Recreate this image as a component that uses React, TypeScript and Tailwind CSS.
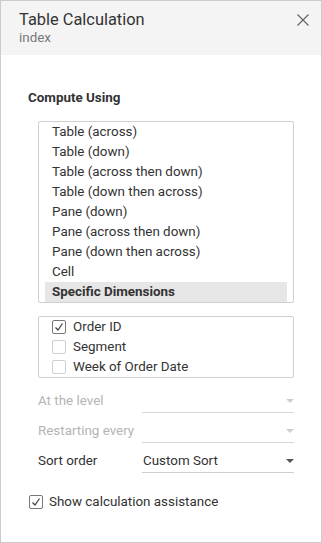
import { useState } from "react";

const computeOptions = [
  "Table (across)",
  "Table (down)",
  "Table (across then down)",
  "Table (down then across)",
  "Pane (down)",
  "Pane (across then down)",
  "Pane (down then across)",
  "Cell",
  "Specific Dimensions",
];

function CheckBox({ checked, onChange }: { checked: boolean; onChange: () => void }) {
  return (
    <button
      onClick={onChange}
      className={`w-[14px] h-[14px] shrink-0 rounded-[2px] border bg-white flex items-center justify-center ${
        checked ? "border-[#777]" : "border-[#cfcfcf]"
      }`}
    >
      {checked && (
        <svg width="12" height="12" viewBox="0 0 12 12">
          <polyline points="2.5,6.5 5,9 9.5,2.5" fill="none" stroke="#444" strokeWidth="1.3" />
        </svg>
      )}
    </button>
  );
}

function SelectRow({ label, value, disabled }: { label: string; value?: string; disabled?: boolean }) {
  return (
    <div className="flex items-center h-[30px]">
      <span className={`w-[104px] leading-[20px] ${disabled ? "text-[#b4b4b4]" : "text-[#333]"}`}>{label}</span>
      <div
        className={`w-[152px] h-[24px] border-b flex items-center justify-between pl-[1px] ${
          disabled ? "border-[#d6d6d6]" : "border-[#cfcfcf]"
        }`}
      >
        <span className="text-[#333] leading-[20px]">{value}</span>
        <svg width="8" height="4" viewBox="0 0 8 4">
          <polygon points="0,0 8,0 4,4" fill={disabled ? "#cfcfcf" : "#555"} />
        </svg>
      </div>
    </div>
  );
}

export default function App() {
  const [selected, setSelected] = useState("Specific Dimensions");
  const [dims, setDims] = useState({ "Order ID": true, Segment: false, "Week of Order Date": false } as Record<string, boolean>);
  const [assist, setAssist] = useState(true);

  return (
    <div
      className="w-[322px] h-[543px] border border-[#cbcbcb] bg-white flex flex-col text-[13.4px] text-[#333]"
      style={{ fontFamily: "Roboto, 'Liberation Sans', sans-serif" }}
    >
      {/* Header */}
      <div className="h-[54px] bg-[#f4f4f4] flex items-start justify-between pl-[18px] pr-[12px] pt-[9px]">
        <div>
          <div className="text-[16.4px] leading-[20px] text-[#333]">Table Calculation</div>
          <div className="text-[13.4px] leading-[16px] text-[#777]">index</div>
        </div>
        <button className="mt-[4px]">
          <svg width="12" height="12" viewBox="0 0 12 12">
            <path d="M0.5 0.5 L11.5 11.5 M11.5 0.5 L0.5 11.5" stroke="#666" strokeWidth="1.2" />
          </svg>
        </button>
      </div>

      {/* Body */}
      <div className="pl-[27px] pt-[33px]">
        <div className="font-bold leading-[20px] text-[#333]">Compute Using</div>

        <div className="ml-[10px] mt-[13px] w-[256px] border border-[#cfcfcf] rounded-[2px] px-[6px]">
          {computeOptions.map((opt) => (
            <div
              key={opt}
              onClick={() => setSelected(opt)}
              className={`h-[20px] leading-[20px] pl-[7px] cursor-default ${
                selected === opt ? "bg-[#e6e6e6] font-bold" : ""
              }`}
            >
              {opt}
            </div>
          ))}
        </div>

        <div className="ml-[10px] mt-[13px] w-[256px] border border-[#cfcfcf] rounded-[2px] pl-[13px]">
          {Object.keys(dims).map((d) => (
            <div key={d} className="h-[20px] flex items-center gap-[7px]">
              <CheckBox checked={dims[d]} onChange={() => setDims({ ...dims, [d]: !dims[d] })} />
              <span className="leading-[20px]">{d}</span>
            </div>
          ))}
        </div>

        <div className="ml-[10px] mt-[8px]">
          <SelectRow label="At the level" disabled />
          <SelectRow label="Restarting every" disabled />
          <SelectRow label="Sort order" value="Custom Sort" />
        </div>

        <div className="mt-[16px] ml-[1px] h-[20px] flex items-center gap-[6px]">
          <CheckBox checked={assist} onChange={() => setAssist(!assist)} />
          <span className="leading-[20px]">Show calculation assistance</span>
        </div>
      </div>
    </div>
  );
}
